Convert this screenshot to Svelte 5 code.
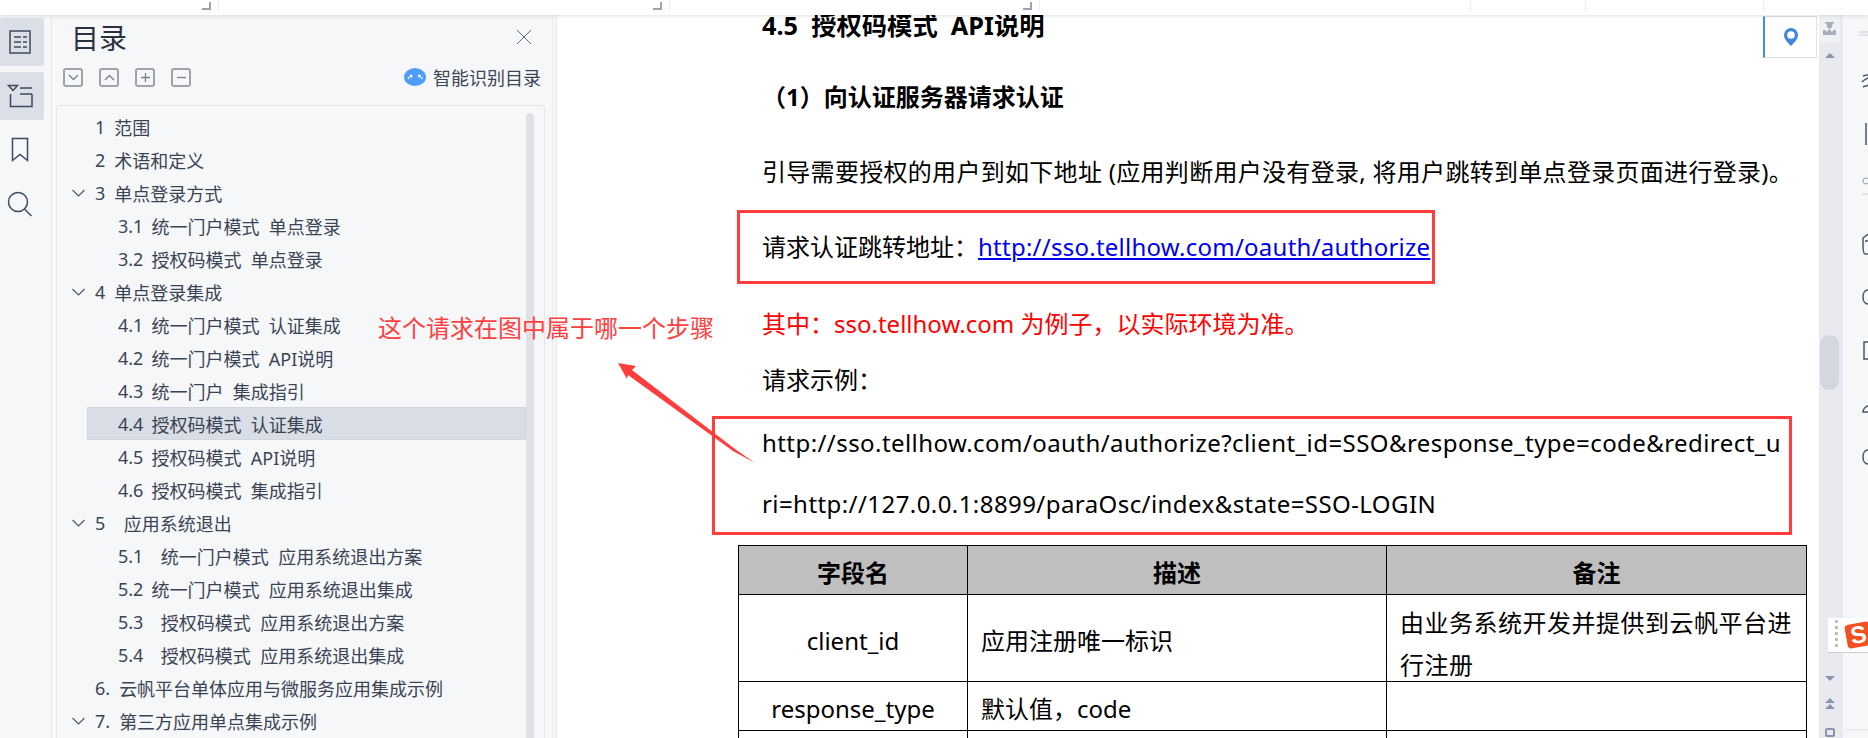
<script lang="ts">
  type Row = { num: string; name: string; level: number; open?: boolean; active?: boolean };

  const rows: Row[] = [
    { num: "1", name: "范围", level: 1 },
    { num: "2", name: "术语和定义", level: 1 },
    { num: "3", name: "单点登录方式", level: 1, open: true },
    { num: "3.1", name: "统一门户模式  单点登录", level: 2 },
    { num: "3.2", name: "授权码模式  单点登录", level: 2 },
    { num: "4", name: "单点登录集成", level: 1, open: true },
    { num: "4.1", name: "统一门户模式  认证集成", level: 2 },
    { num: "4.2", name: "统一门户模式  API说明", level: 2 },
    { num: "4.3", name: "统一门户  集成指引", level: 2 },
    { num: "4.4", name: "授权码模式  认证集成", level: 2, active: true },
    { num: "4.5", name: "授权码模式  API说明", level: 2 },
    { num: "4.6", name: "授权码模式  集成指引", level: 2 },
    { num: "5", name: "  应用系统退出", level: 1, open: true },
    { num: "5.1", name: "  统一门户模式  应用系统退出方案", level: 2 },
    { num: "5.2", name: "统一门户模式  应用系统退出集成", level: 2 },
    { num: "5.3", name: "  授权码模式  应用系统退出方案", level: 2 },
    { num: "5.4", name: "  授权码模式  应用系统退出集成", level: 2 },
    { num: "6.", name: "云帆平台单体应用与微服务应用集成示例", level: 1 },
    { num: "7.", name: "第三方应用单点集成示例", level: 1, open: true }
  ];

  // ruler cells along the top edge, the first three carry a crop mark
  const cells = [
    { width: 219, mark: true },
    { width: 451, mark: true },
    { width: 370, mark: true },
    { width: 431, mark: false },
    { width: 115, mark: false },
    { width: 178, mark: false }
  ];
</script>

<div class="page">
  <div class="topbar">
    {#each cells as cell}
      <span class="cell" style="width: {cell.width}px">
        {#if cell.mark}<span class="crop"></span>{/if}
      </span>
    {/each}
  </div>

  <div class="main">
    <nav class="rail">
      <button class="tile on" aria-label="目录">
        <svg width="22" height="24" viewBox="0 0 22 24" fill="none" stroke="#3d4a63" stroke-width="1.5">
          <rect x="1" y="1" width="20" height="22" />
          <path d="M5 7h7M14 7h4M5 12h7M14 12h4M5 17h7M14 17h4" />
        </svg>
      </button>
      <button class="tile on" aria-label="大纲">
        <svg width="26" height="24" viewBox="0 0 26 24" fill="none" stroke="#3d4a63" stroke-width="1.5">
          <path d="M1.500 1.500h9l-4.500 5zM13 4h12M13 10h12" />
          <path d="M3.500 10v12.500H25V10" />
        </svg>
      </button>
      <button class="tile" aria-label="书签">
        <svg width="18" height="26" viewBox="0 0 18 26" fill="none" stroke="#3d4a63" stroke-width="1.5">
          <path d="M1.500 1.500h15v22l-7.500-6-7.500 6z" />
        </svg>
      </button>
      <button class="tile" aria-label="搜索">
        <svg width="26" height="26" viewBox="0 0 26 26" fill="none" stroke="#3d4a63" stroke-width="1.5">
          <circle cx="11" cy="11" r="9.500" />
          <path d="M17.500 18l7 7" />
        </svg>
      </button>
    </nav>

    <aside class="panel">
      <div class="panel-head">
        <h2>目录</h2>
        <svg class="close" width="14" height="14" viewBox="0 0 14 14" stroke="#5d6675" stroke-width="1"><path d="M0 0l14 14M14 0L0 14" /></svg>
      </div>
      <div class="tools">
        <span class="tool"><svg width="11" height="7" viewBox="0 0 11 7" fill="none" stroke="#7a7f88" stroke-width="1.300"><path d="M1 1l4.500 4.500L10 1" /></svg></span>
        <span class="tool"><svg width="11" height="7" viewBox="0 0 11 7" fill="none" stroke="#7a7f88" stroke-width="1.300"><path d="M1 6l4.500-4.500L10 6" /></svg></span>
        <span class="tool"><svg width="9" height="9" viewBox="0 0 9 9" stroke="#7a7f88" stroke-width="1.300"><path d="M0 4.500h9M4.500 0v9" /></svg></span>
        <span class="tool"><svg width="9" height="9" viewBox="0 0 9 9" stroke="#7a7f88" stroke-width="1.300"><path d="M0 4.500h9" /></svg></span>
        <span class="smart">
          <svg width="22" height="18" viewBox="0 0 22 18">
            <ellipse cx="11" cy="9" rx="11" ry="9" fill="#4f9cf9" />
            <circle cx="7" cy="8" r="1.500" fill="#fff" />
            <circle cx="4.500" cy="10" r="0.900" fill="#fff" />
            <circle cx="15.500" cy="8" r="1.500" fill="#fff" />
            <circle cx="18" cy="10" r="0.900" fill="#fff" />
          </svg>
          智能识别目录
        </span>
      </div>
      <div class="tree">
        <div class="track"></div>
        {#each rows as row}
          <div class="row lv{row.level}" class:active={row.active}>
            {#if row.open}
              <svg class="chev" width="13" height="8" viewBox="0 0 13 8" fill="none" stroke="#4a5568" stroke-width="1.100"><path d="M.5 1l6 6 6-6" /></svg>
            {/if}
            <span class="num">{row.num}</span>
            <span class="name">{row.name}</span>
          </div>
        {/each}
      </div>
    </aside>

    <section class="doc">
      <div class="sheet">
        <h3>4.5&nbsp; 授权码模式&nbsp; API说明</h3>
        <h4>（1）向认证服务器请求认证</h4>
        <p class="intro">引导需要授权的用户到如下地址 (应用判断用户没有登录, 将用户跳转到单点登录页面进行登录)。</p>
        <p class="jump">请求认证跳转地址：<a href="#top">http://sso.tellhow.com/oauth/authorize</a></p>
        <p class="note">其中：sso.tellhow.com 为例子，以实际环境为准。</p>
        <p class="eg">请求示例：</p>
        <p class="url">http://sso.tellhow.com/oauth/authorize?client_id=SSO&amp;response_type=code&amp;redirect_u<br />ri=http://127.0.0.1:8899/paraOsc/index&amp;state=SSO-LOGIN</p>
        <table>
          <thead>
            <tr><th class="c1">字段名</th><th class="c2">描述</th><th>备注</th></tr>
          </thead>
          <tbody>
            <tr class="r1"><td class="mid">client_id</td><td>应用注册唯一标识</td><td><div class="wide">由业务系统开发并提供到云帆平台进行注册</div></td></tr>
            <tr class="r2"><td class="mid">response_type</td><td>默认值，code</td><td></td></tr>
            <tr class="r3"><td class="mid"></td><td></td><td></td></tr>
          </tbody>
        </table>
      </div>
      <span class="pin">
        <svg width="14" height="18" viewBox="0 0 14 18"><path fill-rule="evenodd" fill="#3f87dc" d="M7 0a7 7 0 0 1 7 7c0 4-3.500 7.500-7 11C3.500 14.500 0 11 0 7a7 7 0 0 1 7-7zm0 3.200a3.800 3.800 0 1 0 0 7.600 3.800 3.800 0 0 0 0-7.600z" /></svg>
      </span>
    </section>

    <div class="vscroll">
      <span class="vs-top">
        <svg width="13" height="13" viewBox="0 0 13 13" fill="#a8aec0"><path d="M1.500 0h10L9 3v2l-2.500 2.500L4 5V3zM0 8h2.500v1.500h2V8H8v1.500h2V8h3v5H0z" /></svg>
      </span>
      <span class="tri up"></span>
      <span class="thumb"></span>
      <span class="tri down"></span>
      <svg class="dbl" width="10" height="11" viewBox="0 0 10 11" fill="#8c94ad"><path d="M5 0l5 5H0zM5 6l5 5H0z" /></svg>
      <span class="vs-square"></span>
    </div>

    <aside class="side">
      <!-- tool icons, the window cuts them off at the right edge -->
      <svg class="side-icons" width="25" height="723" viewBox="0 0 25 723" fill="none" stroke="#4d5566" stroke-width="1.500">
        <path d="M16 17h9M16 20h9" stroke="#c9ccd2" stroke-width="1" />
        <path d="M20 61c3-1 5-1 5-1M19 67c2-2 4-3 6-4M20 72c2-1 4-1 5-2" />
        <path d="M23 108v22" />
        <circle cx="23" cy="166" r="3" stroke="#9aa0ab" stroke-width="1" />
        <path d="M19 179h6" stroke="#c9ccd2" stroke-width="1" />
        <path d="M25 219l-5 4v6c0 5 0 10 2 10h3M22 226h3" />
        <path d="M25 275c-3 0-5 3-5 7s2 7 5 7" />
        <path d="M25 327h-4v17h4" />
        <path d="M25 391c-2 0-5 3-5 6h5" />
        <path d="M25 435c-3 0-5 3-5 7s2 7 5 7" />
        <path d="M2 715h23" stroke="#e2e4e8" stroke-width="1" />
      </svg>
    </aside>
  </div>

  <!-- annotations drawn over the page -->
  <div class="mark box-a"></div>
  <div class="mark box-b"></div>
  <div class="callout">这个请求在图中属于哪一个步骤</div>
  <svg class="arrow" width="150" height="110" viewBox="0 0 150 110">
    <path d="M2 2L20 5 16 9 119 88 139 102 117 90 12 14 11 18z" fill="#ff3d3d" />
  </svg>
  <div class="ime"><span class="grip"></span><span class="s">S</span></div>
</div>

<style>
  :global(body) {
    margin: 0;
    background: #fff;
  }

  .page {
    position: relative;
    width: 1868px;
    height: 738px;
    overflow: hidden;
    font-family: "Noto Sans", "Noto Sans CJK SC", sans-serif;
    color: #000;
  }

  .topbar {
    position: relative;
    z-index: 2;
    display: flex;
    height: 15px;
    background: #fff;
    box-shadow: 0 1px 4px rgba(0, 0, 0, 0.12);
  }

  .cell {
    flex: none;
    display: flex;
    justify-content: flex-end;
    box-sizing: border-box;
    height: 12px;
    padding-right: 7px;
    border-right: 1px solid #eceef1;
  }

  .crop {
    width: 7px;
    height: 6px;
    margin-top: 2px;
    border-right: 2px solid #9aa2b4;
    border-bottom: 2px solid #9aa2b4;
  }

  .main {
    display: flex;
    height: 723px;
  }

  .rail {
    flex: none;
    display: flex;
    flex-direction: column;
    align-items: flex-start;
    gap: 6px;
    width: 52px;
    padding-top: 3px;
    box-sizing: border-box;
    background: #f6f7f9;
    border-right: 1px solid #e6e8ec;
  }

  .tile {
    display: flex;
    align-items: center;
    justify-content: center;
    width: 44px;
    height: 48px;
    padding: 0 4px 0 0;
    border: 0;
    border-radius: 0 3px 3px 0;
    background: transparent;
  }

  .tile.on {
    background: #dcdfe6;
  }

  .panel {
    flex: none;
    width: 505px;
    box-sizing: border-box;
    padding-left: 4px;
    background: #f6f7f9;
    border-right: 1px solid #e4e6ea;
    box-shadow: inset -3px 0 0 #f6f7f9, inset -4px 0 0 #e9ebee;
  }

  .panel-head {
    display: flex;
    align-items: center;
    justify-content: space-between;
    box-sizing: border-box;
    height: 45px;
    padding: 0 25px 2px 15px;
  }

  h2 {
    margin: 0;
    font-size: 28px;
    font-weight: 400;
    color: #2a3242;
  }

  .tools {
    display: flex;
    align-items: center;
    gap: 16px;
    height: 34px;
    padding: 0 15px 0 7px;
    margin-bottom: 11px;
  }

  .tool {
    display: flex;
    align-items: center;
    justify-content: center;
    box-sizing: border-box;
    width: 20px;
    height: 19px;
    border: 2px solid #a0a3a8;
    border-radius: 3px;
  }

  .smart {
    display: flex;
    align-items: center;
    gap: 7px;
    margin-left: auto;
    font-size: 18px;
    color: #3b4455;
  }

  .tree {
    position: relative;
    height: 640px;
    width: 489px;
    box-sizing: border-box;
    padding-top: 4px;
    border: 1px solid #e4e6ea;
    border-radius: 3px;
    overflow: hidden;
  }

  .track {
    position: absolute;
    top: 7px;
    bottom: 0;
    right: 10px;
    width: 8px;
    border-radius: 4px 4px 0 0;
    background: #dfe1e4;
  }

  .row {
    position: relative;
    display: flex;
    align-items: center;
    gap: 9px;
    width: 439px;
    height: 33px;
    margin-left: 30px;
    box-sizing: border-box;
    font-size: 18px;
    white-space: pre;
    color: #3b4455;
  }

  .row.lv1 {
    padding-left: 8px;
  }

  .row.lv2 {
    gap: 8px;
    padding-left: 31px;
  }

  .row.active {
    background: #d9dde5;
    border: 1px solid #d2d6de;
    padding-left: 30px;
  }

  .chev {
    position: absolute;
    left: -15px;
    top: 13px;
  }

  h3,
  h4,
  p {
    margin: 0;
  }

  .doc {
    position: relative;
    flex: 1;
    min-width: 0;
    overflow: hidden;
  }

  .sheet {
    padding-left: 205px;
    font-size: 24px;
    line-height: 42px;
  }

  h3 {
    font-size: 25.300px;
    line-height: 20px;
  }

  h4 {
    margin-top: 41px;
    font-size: 24px;
  }

  .intro {
    margin-top: 33px;
    letter-spacing: 0.3px;
    white-space: nowrap;
  }

  .jump {
    margin-top: 33px;
  }

  .jump a {
    color: #0000ee;
    letter-spacing: 0.25px;
  }

  .note {
    margin-top: 35px;
    color: #f00;
  }

  .eg {
    margin-top: 14px;
  }

  .url {
    margin-top: 11px;
    line-height: 61px;
    letter-spacing: 0.43px;
    white-space: nowrap;
  }

  table {
    width: 1069px;
    margin: 11px 0 0 -24px;
    border-collapse: collapse;
    table-layout: fixed;
  }

  th,
  td {
    box-sizing: border-box;
    padding: 6px 13px 0;
    border: 1px solid #000;
    font-size: 24px;
    line-height: 42px;
  }

  th {
    height: 49px;
    padding: 6px 0 0;
    background: #bfbfbf;
  }

  .c1 {
    width: 229px;
  }

  .c2 {
    width: 419px;
  }

  .mid {
    text-align: center;
    padding: 6px 0 0;
  }

  /* two lines sit a little low in the cell and run past the row's height */
  .wide {
    margin-bottom: -6px;
    letter-spacing: 0.5px;
  }

  .r1 td {
    height: 87px;
  }

  .r2 td,
  .r3 td {
    height: 49px;
  }

  .pin {
    position: absolute;
    top: 1px;
    right: 2px;
    display: flex;
    align-items: center;
    justify-content: center;
    width: 54px;
    height: 42px;
    background: #fff;
    border: 1px solid #e0e3e8;
    border-left: 2px solid #3f8cf0;
    box-sizing: border-box;
  }

  .vscroll {
    flex: none;
    display: flex;
    flex-direction: column;
    align-items: center;
    position: relative;
    width: 24px;
    padding-right: 3px;
    box-sizing: border-box;
    background: #e8eaf0;
  }

  .vs-top {
    display: flex;
    align-items: center;
    justify-content: center;
    width: 21px;
    height: 27px;
    background: #f0f1f5;
  }

  .tri {
    width: 0;
    height: 0;
    border-left: 5px solid transparent;
    border-right: 5px solid transparent;
  }

  .tri.up {
    margin-top: 11px;
    border-bottom: 5px solid #8c94ad;
  }

  .tri.down {
    margin-top: 286px;
    border-top: 5px solid #8c94ad;
  }

  .thumb {
    width: 19px;
    height: 55px;
    margin-top: 277px;
    border-radius: 9px;
    background: #d3d7df;
  }

  .dbl {
    margin-top: 17px;
  }

  .vs-square {
    box-sizing: border-box;
    width: 10px;
    height: 9px;
    margin-top: 19px;
    border: 2px solid #8c94ad;
    border-radius: 2px;
  }

  .side {
    flex: none;
    width: 25px;
    background: #f6f7f9;
  }

  .side-icons {
    display: block;
  }

  .mark {
    position: absolute;
    box-sizing: border-box;
    border: 3px solid #ff3d3d;
  }

  .box-a {
    left: 737px;
    top: 210px;
    width: 698px;
    height: 74px;
  }

  .box-b {
    left: 712px;
    top: 416px;
    width: 1080px;
    height: 119px;
  }

  .callout {
    position: absolute;
    left: 378px;
    top: 310px;
    font-size: 24px;
    line-height: 36px;
    color: #ff4040;
    white-space: nowrap;
  }

  .arrow {
    position: absolute;
    left: 616px;
    top: 361px;
  }

  .ime {
    position: absolute;
    left: 1828px;
    top: 618px;
    display: flex;
    align-items: center;
    width: 40px;
    height: 34px;
    background: #fff;
    border-bottom: 1px solid #cfcfcf;
    overflow: hidden;
  }

  .grip {
    flex: none;
    width: 3px;
    height: 30px;
    margin-left: 7px;
    background: repeating-linear-gradient(#bdbdbd 0 3px, transparent 3px 6px);
  }

  .s {
    flex: none;
    margin-left: 8px;
    width: 25px;
    height: 24px;
    font: 800 24px/24px "Liberation Sans", sans-serif;
    color: #fff;
    text-align: center;
    background: #f4511e;
    border-radius: 4px;
    transform: rotate(-10deg);
  }
</style>
